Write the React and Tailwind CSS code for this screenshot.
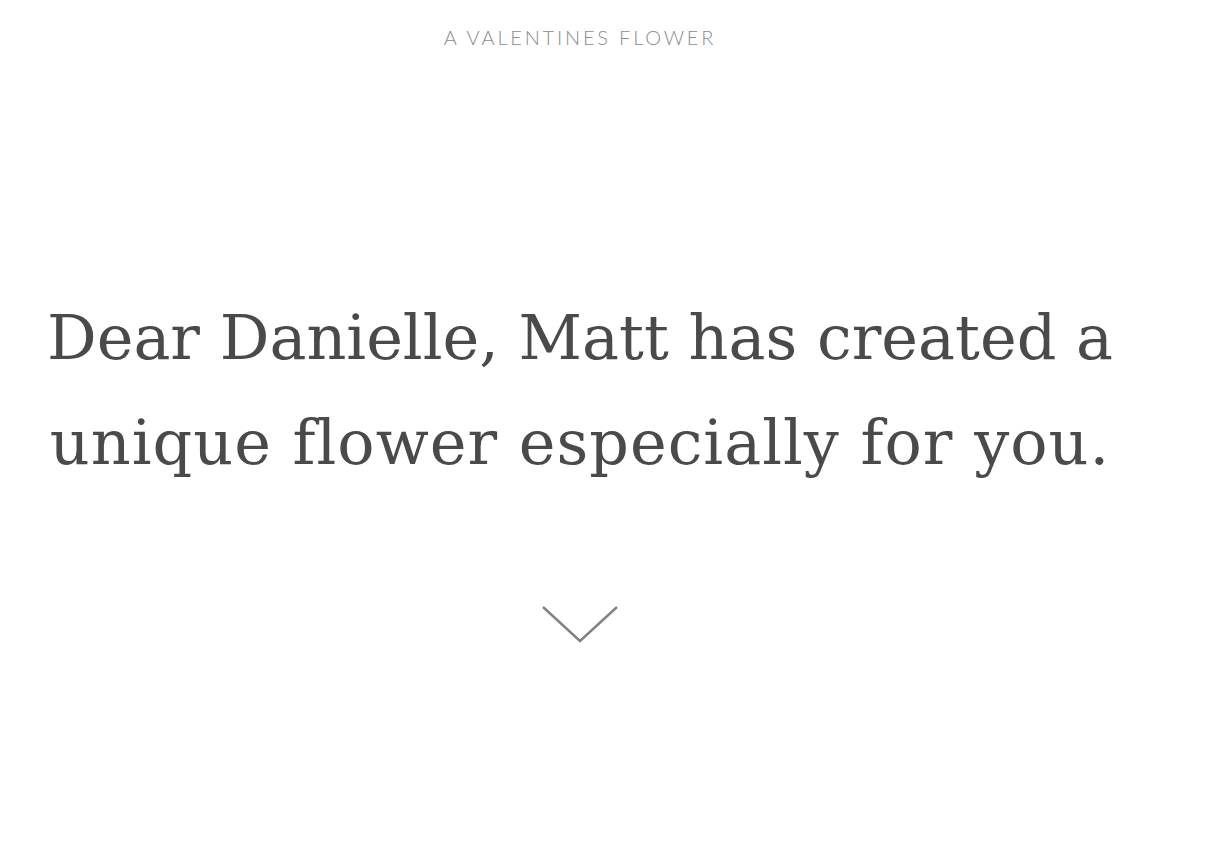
import React from "react";

const App = () => {
  return (
    <div className="min-h-[861px] w-[1160px] bg-white flex flex-col items-center">
      {/* header */}
      <div
        className="mt-[24px] text-[20px] leading-[26px] font-light tracking-[0.14em] text-[#8c8c8c]"
        style={{ fontFamily: "Lato, 'Open Sans', sans-serif" }}
      >
        A VALENTINES FLOWER
      </div>

      {/* message */}
      <h1
        className="mt-[235px] text-center text-[62px] leading-[105px] text-[#4a4a4a] [font-variant-ligatures:none]"
        style={{ fontFamily: "'DejaVu Serif', 'Liberation Serif', serif" }}
      >
        Dear Danielle, Matt has created a
        <br />
        <span className="tracking-[1px]">unique flower especially for you.</span>
      </h1>

      {/* scroll chevron */}
      <button type="button" className="mt-[110px] block">
        <svg width="78" height="40" viewBox="0 0 78 40" fill="none">
          <path d="M2 2 L39 36 L76 2" stroke="#828282" strokeWidth="2.4" />
        </svg>
      </button>
    </div>
  );
};

export default App;
